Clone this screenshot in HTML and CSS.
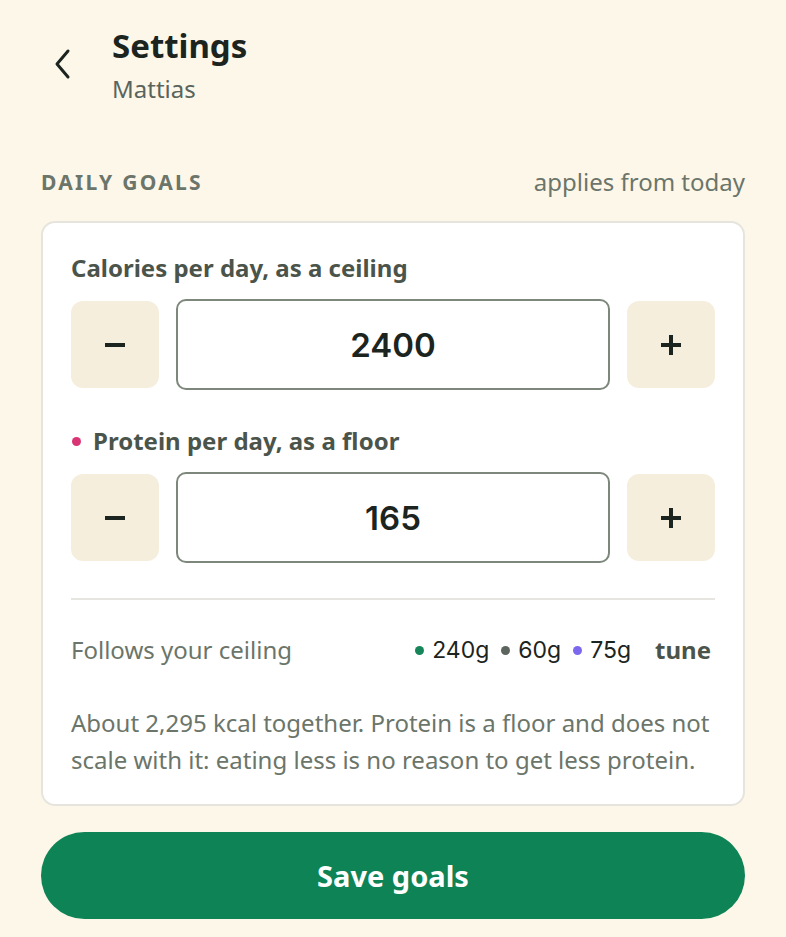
FILE: index.html
```html
<!DOCTYPE html>
<html lang="en">
<head>
    <meta charset="UTF-8">
    <meta name="viewport" content="width=device-width, initial-scale=1.0">
    <title>Settings</title>
    <link rel="stylesheet" href="styles.css">
</head>
<body>
    <div class="page">
        <div class="top-bar">
            <button class="back-btn" aria-label="Back">
                <svg width="22" height="32" viewBox="0 0 22 32" fill="none" stroke="#1c2420" stroke-width="3" stroke-linecap="round" stroke-linejoin="round">
                    <path d="M16 3 L5 16 L16 29"/>
                </svg>
            </button>
            <div class="top-titles">
                <h1>Settings</h1>
                <p class="subtitle">Mattias</p>
            </div>
        </div>

        <div class="section-head">
            <span class="section-title">DAILY GOALS</span>
            <span class="section-note">applies from today</span>
        </div>

        <div class="goal-card">
            <div class="field-label">Calories per day, as a ceiling</div>
            <div class="stepper">
                <button class="step-btn"><span class="minus"></span></button>
                <div class="step-value">2400</div>
                <button class="step-btn"><span class="plus"></span></button>
            </div>

            <div class="field-label protein"><span class="dot dot-pink"></span>Protein per day, as a floor</div>
            <div class="stepper">
                <button class="step-btn"><span class="minus"></span></button>
                <div class="step-value">165</div>
                <button class="step-btn"><span class="plus"></span></button>
            </div>

            <div class="macro-row">
                <span class="macro-note">Follows your ceiling</span>
                <div class="macros">
                    <span class="macro"><span class="mdot mdot-green"></span>240g</span>
                    <span class="macro"><span class="mdot mdot-grey"></span>60g</span>
                    <span class="macro"><span class="mdot mdot-purple"></span>75g</span>
                    <span class="tune">tune</span>
                </div>
            </div>

            <p class="card-text">About 2,295 kcal together. Protein is a floor and does not scale with it: eating less is no reason to get less protein.</p>
        </div>

        <button class="save-btn">Save goals</button>
    </div>
</body>
</html>
```

FILE: styles.css
```css
:root {
    --bg: #fdf7ea;
    --ink: #1c2420;
    --muted: #6b7569;
    --label: #4b544b;
    --green: #0e8456;
    --step-bg: #f5eedd;
}

* {
    box-sizing: border-box;
    margin: 0;
    padding: 0;
}

body {
    font-family: "Noto Sans", "Open Sans", sans-serif;
    background-color: var(--bg);
    color: var(--ink);
}

.page {
    padding: 24px 41px 18px;
}

.top-bar {
    display: flex;
    align-items: flex-start;
    gap: 38px;
    padding-left: 11px;
}

.back-btn {
    background: none;
    border: none;
    width: 22px;
    height: 32px;
    margin-top: 24px;
    display: flex;
    cursor: pointer;
}

.top-titles h1 {
    font-size: 33px;
    font-weight: 700;
    line-height: 44px;
}

.subtitle {
    font-size: 24px;
    color: #59645d;
    line-height: 32px;
    margin-top: 5px;
}

.section-head {
    display: flex;
    justify-content: space-between;
    align-items: center;
    margin-top: 61px;
    line-height: 32px;
}

.section-title {
    font-size: 21px;
    font-weight: 700;
    letter-spacing: 2.3px;
    color: var(--muted);
}

.section-note {
    font-size: 24px;
    color: var(--muted);
}

.goal-card {
    margin-top: 23px;
    background-color: #fff;
    border: 2px solid #e6e5dd;
    border-radius: 14px;
    padding: 28px 28px 26px;
}

.field-label {
    font-size: 24px;
    font-weight: 700;
    color: var(--label);
    line-height: 34px;
    display: flex;
    align-items: center;
}

.protein {
    margin-top: 34px;
}

.dot {
    width: 9px;
    height: 9px;
    border-radius: 50%;
    margin: 0 12px 0 1px;
}

.dot-pink {
    background-color: #d93575;
}

.stepper {
    display: flex;
    align-items: center;
    gap: 17px;
    margin-top: 14px;
}

.step-btn {
    width: 88px;
    height: 87px;
    flex-shrink: 0;
    border: none;
    border-radius: 12px;
    background-color: var(--step-bg);
    display: flex;
    align-items: center;
    justify-content: center;
    cursor: pointer;
}

.minus {
    width: 20px;
    height: 4px;
    background-color: var(--ink);
}

.plus {
    position: relative;
    width: 20px;
    height: 20px;
}

.plus::before,
.plus::after {
    content: "";
    position: absolute;
    background-color: var(--ink);
}

.plus::before {
    left: 0;
    top: 8px;
    width: 20px;
    height: 4px;
}

.plus::after {
    left: 8px;
    top: 0;
    width: 4px;
    height: 20px;
}

.step-value {
    flex: 1;
    height: 91px;
    border: 2px solid #7d877c;
    border-radius: 10px;
    display: flex;
    align-items: center;
    justify-content: center;
    font-family: Inter, sans-serif;
    font-size: 33px;
    font-weight: 600;
    color: var(--ink);
}

.macro-row {
    display: flex;
    justify-content: space-between;
    align-items: center;
    margin-top: 35px;
    padding-top: 34px;
    border-top: 2px solid #e6e5df;
    line-height: 32px;
}

.macro-note {
    font-size: 24px;
    color: var(--muted);
}

.macros {
    display: flex;
    align-items: center;
    gap: 12px;
    padding-right: 4px;
}

.macro {
    display: flex;
    align-items: center;
    gap: 8px;
    font-family: Inter, sans-serif;
    font-size: 23px;
    color: var(--ink);
}

.mdot {
    width: 9px;
    height: 9px;
    border-radius: 50%;
}

.mdot-green { background-color: #16865a; }
.mdot-grey { background-color: #5c655e; }
.mdot-purple { background-color: #7b68ee; }

.tune {
    margin-left: 12px;
    font-size: 24px;
    font-weight: 700;
    color: var(--label);
}

.card-text {
    margin-top: 38px;
    font-size: 24px;
    line-height: 37px;
    color: var(--muted);
}

.save-btn {
    display: block;
    width: 100%;
    height: 87px;
    margin-top: 26px;
    border: none;
    border-radius: 44px;
    background-color: var(--green);
    color: #fff;
    font-family: "Noto Sans", sans-serif;
    font-size: 29px;
    font-weight: 700;
    cursor: pointer;
}
```
